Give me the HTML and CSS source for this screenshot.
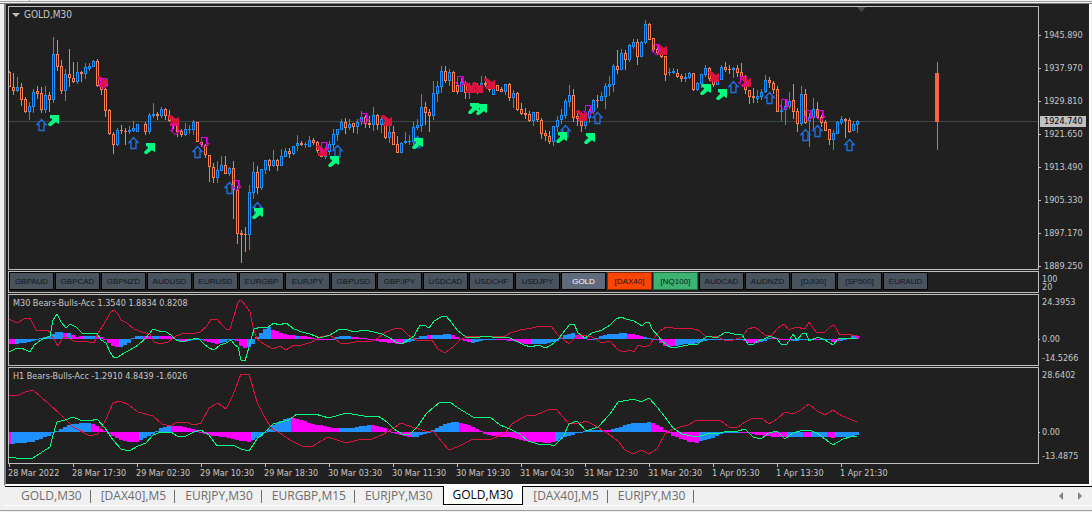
FILE: index.html
```html
<!DOCTYPE html>
<html lang="en">

<head>
    <meta charset="UTF-8">
    <meta name="viewport" content="width=device-width, initial-scale=1.0">
    <title>GOLD,M30</title>
    <link rel="stylesheet" href="styles.css">
</head>

<body>
    <header class="toolbar-edge"><span></span><span></span></header>

    <main class="terminal">
        <section class="pane pane-price">
            <div class="plot">
                <h1 class="pane-title"><span class="caret"></span>GOLD,M30</h1>
                <svg id="priceChart" class="chart"></svg>
            </div>
            <ul class="scale scale-price">
                <li>1945.890</li>
                <li>1937.970</li>
                <li>1929.810</li>
                <li>1921.650</li>
                <li>1913.490</li>
                <li>1905.330</li>
                <li>1897.170</li>
                <li>1889.250</li>
            </ul>
            <span class="bid">1924.740</span>
        </section>

        <section class="pane pane-symbols">
            <div class="plot symbols">
                <button>GBPAUD</button>
                <button>GBPCAD</button>
                <button>GBPNZD</button>
                <button>AUDUSD</button>
                <button>EURUSD</button>
                <button>EURGBP</button>
                <button>EURJPY</button>
                <button>GBPUSD</button>
                <button>GBPJPY</button>
                <button>USDCAD</button>
                <button>USDCHF</button>
                <button>USDJPY</button>
                <button class="selected">GOLD</button>
                <button class="sell">[DAX40]</button>
                <button class="buy">[NQ100]</button>
                <button>AUDCAD</button>
                <button>AUDNZD</button>
                <button>[DJI30]</button>
                <button>[SP500]</button>
                <button>EURAUD</button>
            </div>
            <ul class="scale scale-symbols">
                <li>100</li>
                <li>20</li>
            </ul>
        </section>

        <section class="pane pane-m30">
            <div class="plot">
                <h2 class="pane-title">M30 Bears-Bulls-Acc 1.3540 1.8834 0.8208</h2>
                <svg id="m30Chart" class="chart"></svg>
            </div>
            <ul class="scale scale-m30">
                <li>24.3953</li>
                <li class="zero">0.00</li>
                <li>-14.5266</li>
            </ul>
        </section>

        <section class="pane pane-h1">
            <div class="plot">
                <h2 class="pane-title">H1 Bears-Bulls-Acc -1.2910 4.8439 -1.6026</h2>
                <svg id="h1Chart" class="chart"></svg>
            </div>
            <ul class="scale scale-h1">
                <li>28.6402</li>
                <li class="zero">0.00</li>
                <li>-13.4875</li>
            </ul>
        </section>

        <ol class="time-axis">
            <li>28 Mar 2022</li>
            <li>28 Mar 17:30</li>
            <li>29 Mar 02:30</li>
            <li>29 Mar 10:30</li>
            <li>29 Mar 18:30</li>
            <li>30 Mar 03:30</li>
            <li>30 Mar 11:30</li>
            <li>30 Mar 19:30</li>
            <li>31 Mar 04:30</li>
            <li>31 Mar 12:30</li>
            <li>31 Mar 20:30</li>
            <li>1 Apr 05:30</li>
            <li>1 Apr 13:30</li>
            <li>1 Apr 21:30</li>
        </ol>
    </main>

    <nav class="tabs">
        <button>GOLD,M30</button>
        <button>[DAX40],M5</button>
        <button>EURJPY,M30</button>
        <button>EURGBP,M15</button>
        <button>EURJPY,M30</button>
        <button class="active">GOLD,M30</button>
        <button>[DAX40],M5</button>
        <button>EURJPY,M30</button>
        <div class="tab-scroll">
            <button aria-label="Previous"><svg width="4" height="8"><path d="M4 0V8L0 4Z" /></svg></button>
            <button aria-label="Next"><svg width="4" height="8"><path d="M0 0V8L4 4Z" /></svg></button>
        </div>
    </nav>
    <footer class="status-edge"></footer>

    <script src="chart.js"></script>
</body>

</html>
```
FILE: styles.css
```css
* {
    box-sizing: border-box;
}

body {
    margin: 0;
    height: 100vh;
    display: flex;
    flex-direction: column;
    overflow: hidden;
    background-color: #f0f0f0;
    font-family: "DejaVu Sans Condensed", "DejaVu Sans", sans-serif;
    font-size: 9px;
    color: #c8c8c8;
}

ul,
ol {
    list-style: none;
    margin: 0;
    padding: 0;
}

button {
    font-family: inherit;
    margin: 0;
    padding: 0;
    border: none;
    cursor: pointer;
}

.toolbar-edge {
    flex: none;
    display: flex;
    height: 4px;
    border-bottom: 1px solid #808080;
}

.toolbar-edge span {
    width: 30px;
    height: 2px;
    border-right: 1px solid #a0a0a0;
    border-bottom: 1px solid #a0a0a0;
}

.toolbar-edge span:last-child {
    flex: 1;
    border-right: none;
}

.terminal {
    flex: 1;
    min-height: 0;
    display: flex;
    flex-direction: column;
    gap: 1px;
    margin: 0 1px 0 4px;
    padding: 2px 0 0 2px;
    background-color: #202020;
    border-left: 2px solid #808080;
    border-right: 2px solid #ffffff;
    border-bottom: 2px solid #ffffff;
}

.pane {
    position: relative;
    flex: none;
    display: flex;
}

.pane-price {
    flex: 1;
    min-height: 0;
}

.pane-symbols {
    height: 22px;
}

.pane-m30 {
    height: 72px;
}

.pane-h1 {
    height: 97px;
}

.plot {
    position: relative;
    flex: 1;
    min-width: 0;
    border: 1px solid #c0c0c0;
    overflow: hidden;
}

.chart {
    display: block;
    width: 100%;
    height: 100%;
}

.pane-title {
    position: absolute;
    top: 2px;
    left: 4px;
    display: flex;
    align-items: center;
    gap: 4px;
    margin: 0;
    font-size: 9px;
    font-weight: 400;
    line-height: 12px;
    white-space: nowrap;
}

.pane-price .pane-title {
    left: 3px;
    font-size: 10px;
}

.caret {
    border: 4px solid transparent;
    border-top-color: #c0c0c0;
    border-bottom: none;
}

/* value scales */
.scale {
    flex: none;
    width: 50px;
    padding-left: 3px;
    line-height: 14px;
}

.scale li {
    position: relative;
}

.scale-price {
    height: 0;
    padding: 13px 0 0 5px;
}

.scale-price li {
    line-height: 33px;
}

.scale-price li::before,
.zero::before {
    content: "";
    position: absolute;
    left: -5px;
    top: 16px;
    width: 2px;
    height: 1px;
    background-color: #c0c0c0;
}

.scale .zero::before {
    left: -3px;
    top: 7px;
    width: 1px;
}

.scale-symbols {
    padding-top: 4px;
    line-height: 8px;
}

.scale-m30,
.scale-h1 {
    padding-top: 1px;
}

.scale-m30 .zero {
    margin: 23px 0 5px;
}

.scale-h1 .zero {
    margin: 43px 0 10px;
}

.bid {
    position: absolute;
    top: 110px;
    right: 3px;
    width: 46px;
    padding-left: 4px;
    line-height: 11px;
    color: #000000;
    background-color: #c0c0c0;
}

/* symbol switcher */
.symbols {
    display: flex;
    gap: 1px;
}

.symbols button {
    width: 45px;
    height: 18px;
    flex: none;
    font-family: "Liberation Sans", Arial, sans-serif;
    font-size: 8px;
    color: #10161c;
    background-color: #48535e;
    border: 1px solid #000000;
}

.symbols .selected {
    color: #ffffff;
    background-color: #5f6b7a;
}

.symbols .sell {
    background-color: #ff4500;
    border-color: #8b2500;
}

.symbols .buy {
    background-color: #3cb371;
    border-color: #1f6b40;
}

.time-axis {
    flex: none;
    display: grid;
    grid-auto-flow: column;
    grid-auto-columns: 64px;
    height: 20px;
    margin-top: -1px;
    line-height: 18px;
    white-space: nowrap;
    overflow: hidden;
}

.time-axis li {
    position: relative;
}

.time-axis li::before {
    content: "";
    position: absolute;
    left: 1px;
    top: 0;
    width: 1px;
    height: 3px;
    background-color: #c0c0c0;
}

/* chart tabs */
.tabs {
    flex: none;
    display: flex;
    gap: 1px;
    height: 20px;
    margin-left: 5px;
    padding-left: 7px;
    border-top: 1px solid #000000;
    border-bottom: 1px solid #ffffff;
}

.tabs button {
    position: relative;
    padding: 0 9px;
    font-family: "Open Sans", "Noto Sans", sans-serif;
    font-size: 12px;
    line-height: 18px;
    color: #6d6d6d;
    background: none;
}

.tabs button::after {
    content: "";
    position: absolute;
    right: 0;
    top: 3px;
    width: 1px;
    height: 13px;
    background-color: #6d6d6d;
}

.tabs .active {
    margin-top: -1px;
    color: #000000;
    background-color: #ffffff;
    border: 1px solid #000000;
    border-top: none;
}

.tabs .active::after,
.tabs button:nth-child(5)::after,
.tabs .tab-scroll button::after {
    display: none;
}

.tab-scroll {
    display: flex;
    margin-left: auto;
    padding-right: 3px;
}

.tabs .tab-scroll button {
    width: 19px;
    padding: 0;
    line-height: 12px;
}

.tab-scroll path {
    fill: #808080;
}

.status-edge {
    flex: none;
    height: 6px;
    border-bottom: 1px solid #f0f0f0;
    box-shadow: inset 0 -1px #a0a0a0;
}

/* chart drawing */
.candle,
.histogram {
    shape-rendering: crispEdges;
}

.up {
    fill: #1e90ff;
}

.down {
    fill: #ff7f50;
}

.hollow {
    fill: #202020;
}

.falling {
    fill: #ff00ff;
}

.forecast {
    fill: #ff6347;
}

.bid-line {
    stroke: #3d4947;
}

.shift-mark {
    fill: #444c50;
}

.bulls,
.bears {
    fill: none;
    stroke-width: 1;
    shape-rendering: crispEdges;
}

.bulls {
    stroke: #00ff7f;
}

.bears {
    stroke: #dc143c;
}

.mark-up {
    fill: none;
    stroke: #1f6fe0;
    stroke-width: 1.4;
}

.mark-down {
    fill: none;
    stroke: #e800f0;
}

.mark-edge {
    fill: none;
    stroke: #c81050;
}

.mark-buy {
    fill: #00ff7f;
}

.mark-sell {
    fill: #dc143c;
}
```
FILE: chart.js
```js
const NS = 'http://www.w3.org/2000/svg';
const STEP = 4;
const FIRST = 9;

// direction high top bottom low, one entry per bar
const candles = `
d 71 72 87 87,d 73 87 91 95,u 77 87 91 92,d 83 87 100 106,d 97 99 112 113,u 102 106 112 120,u 89 92 107 113,d 86 91 94 99,
d 87 93 110 113,u 86 95 110 113,d 92 95 100 112,u 37 54 100 103,d 40 54 67 71,d 60 66 91 94,u 69 74 91 101,d 49 74 78 87,
d 62 78 82 83,u 62 72 82 84,d 71 72 74 82,u 63 67 74 79,u 63 66 69 71,u 60 61 67 67,d 59 61 86 87,d 82 86 90 95,
d 86 89 111 117,d 109 110 134 135,d 132 134 145 154,u 128 130 145 146,d 125 130 131 134,d 128 131 132 145,u 126 130 132 134,u 121 128 131 132,
u 124 124 132 132,-,d 122 124 132 135,u 113 115 132 134,u 103 114 116 118,d 112 114 116 120,u 107 109 116 118,d 108 109 116 120,
d 110 115 121 122,d 118 122 126 129,d 121 126 132 137,d 129 131 135 137,u 123 129 135 136,u 125 129 130 134,u 120 122 130 135,d 122 122 142 142,
d 137 142 145 147,d 144 145 155 158,d 155 155 167 182,d 163 167 178 183,u 161 170 178 183,u 156 165 171 171,d 156 165 174 174,u 167 168 174 176,
d 161 168 190 219,d 186 190 234 244,d 230 233 235 263,d 227 234 235 252,u 185 192 235 250,u 162 172 193 199,d 166 172 188 194,u 169 169 188 190,
u 160 160 170 174,d 159 160 166 171,u 150 160 166 167,d 159 160 166 171,u 149 156 166 166,u 148 151 157 157,d 148 151 154 158,u 146 146 154 155,
u 135 143 146 151,d 141 143 145 146,u 142 144 145 148,u 136 140 147 147,d 138 140 143 145,d 141 142 151 153,d 143 150 157 157,u 147 151 157 159,
u 141 144 152 155,u 129 134 145 150,u 129 129 135 141,u 119 122 130 130,d 118 122 128 134,u 119 124 128 130,d 123 123 127 133,u 119 122 127 134,
u 111 117 122 125,d 115 117 124 128,d 116 123 125 128,u 107 115 125 131,d 114 115 125 130,u 117 119 125 133,d 118 122 138 139,u 125 132 138 143,
d 126 132 145 145,d 136 144 153 153,u 142 143 153 153,u 132 141 143 144,u 135 141 142 145,u 122 127 142 145,u 119 125 128 130,u 94 107 126 132,
d 102 107 113 125,d 109 112 116 132,u 81 93 116 120,u 81 86 94 102,u 66 71 87 93,d 66 71 81 83,u 69 72 81 86,d 71 72 92 92,
d 78 85 92 94,u 78 82 92 92,d 81 82 93 99,u 83 90 93 99,u 82 85 92 93,d 83 85 92 94,u 76 83 92 93,d 76 83 85 87,
d 81 85 90 92,u 84 86 95 95,d 85 85 91 91,d 87 89 92 92,u 84 84 92 95,d 83 84 98 101,u 90 93 98 108,d 92 93 110 111,
d 103 109 114 115,d 108 113 115 119,d 111 114 121 122,u 112 112 121 126,d 112 112 120 122,d 118 120 134 139,d 130 133 136 141,d 131 136 142 144,
u 126 126 142 146,u 116 120 127 132,u 109 115 120 124,u 99 101 116 119,u 85 95 102 107,d 89 95 118 122,d 112 116 119 126,d 118 121 126 132,
u 116 120 126 129,u 109 111 118 123,u 99 100 112 114,d 95 100 101 108,u 92 96 101 101,u 83 86 97 109,u 76 84 87 96,u 64 66 85 92,
d 50 66 70 74,u 49 53 70 70,d 50 53 60 70,u 44 45 60 62,u 39 42 47 49,d 39 42 57 65,u 41 42 57 57,u 20 24 43 44,
d 23 24 40 40,d 38 38 50 52,d 44 49 53 55,d 50 52 57 58,d 56 56 75 81,u 68 72 73 76,u 68 71 73 74,d 69 73 77 78,
d 74 76 79 82,u 73 77 79 82,u 72 73 78 79,d 73 73 90 91,u 82 83 90 91,u 74 74 84 88,u 65 68 75 77,d 67 68 79 81,
d 77 79 85 87,u 78 79 85 85,u 65 67 80 80,d 62 67 70 72,d 65 69 70 74,u 67 68 70 78,d 65 68 73 77,d 63 72 77 78,
d 75 76 90 94,d 90 90 97 104,d 88 96 98 103,u 90 96 99 103,u 89 92 97 100,u 75 80 92 93,d 77 80 83 88,d 81 83 90 94,
d 86 89 112 112,u 100 110 112 121,u 100 106 110 125,u 92 101 107 109,d 84 100 112 119,d 108 111 124 132,u 86 94 124 126,d 89 94 123 124,
u 113 117 121 147,u 98 109 118 129,d 102 109 118 119,d 115 117 123 127,d 120 122 131 131,d 129 129 140 145,u 130 133 140 150,u 121 122 134 134,
u 116 119 123 125,d 118 119 121 138,d 118 120 132 133,u 121 124 131 131,u 120 121 125 133`.split(',').map(s => s.trim().split(' '));

// arrows, x y
const marks = {
    up: '41,119 133,137 197,146 229,182 257,202 337,145 417,136 565,125 597,112 733,81 769,92 805,129 817,125 849,139',
    down: '103,78 175,124 204,137 236,180 324,142 364,113 460,76 588,105 656,44 743,76 784,99 808,110 820,110',
    sell: '97,76 168,115 316,145 381,115 464,82 472,82 484,78 576,110 656,44 708,71 740,76',
    buy: '48,115 144,143 252,208 328,156 412,138 468,103 476,104 556,132 584,133 700,84 716,89'
};

const m30 = {
    zero: 339,
    bars: '9,-5 15,-5 25,-4 35,-2 41,1 48,2 53,5 57,7 65,6 69,6 73,4 77,2 83,3 97,3 101,2 105,-1 109,-4 114,-8 121,-8 129,-4 133,1 137,3 170,3 174,1 178,-2 184,-3 193,-1 200,1 205,-2 213,-4 219,-5 225,-3 232,1 237,-2 241,-7 245,-9 249,-8 253,-5 257,2 261,6 265,10 269,12 273,9 281,6 289,4 301,3 309,2 313,1 319,-1 331,-1 337,2 345,3 353,2 365,1 373,-1 380,-3 390,-4 399,-5 405,-4 413,-2 418,2 423,3 430,4 439,4 447,5 453,4 459,1 463,-2 471,-4 477,-3 485,-1 500,-1 510,-2 519,-3 525,-5 545,-5 555,-3 559,-1 563,2 567,5 573,6 578,4 583,2 590,-2 596,1 605,4 613,5 625,6 637,4 645,2 651,1 659,-2 663,-6 669,-8 677,-7 685,-5 693,-5 701,-3 709,-1 740,-1 745,-2 749,-4 757,-4 763,-3 769,1 777,1 783,-1 797,-2 803,-1 829,-1 833,-3 839,-2 845,-1 849,1 853,3 857,3',
    falling: '9-14 62-66 72-82 97-118 142-150 158-171 178-188 205-218 237-246 270-293 300-330 353-403 426-431 450-471 497-530 574-583 587-592 627-642 657-675 743-759 773-790 810-820 831-838 857-859',
    bulls: '9,352 15,349 21,348 26,350 30,352 34,345 41,340 50,336 53,320 57,314 61,322 66,328 70,324 76,327 82,333 97,333 101,340 106,343 110,352 114,358 118,357 124,353 130,350 138,345 146,338 149,334 153,329 159,331 166,332 171,335 176,340 182,342 188,340 198,338 204,344 209,348 214,350 220,345 226,343 231,340 235,345 238,347 241,360 245,361 249,347 254,329 261,327 268,327 274,323 279,325 286,323 294,329 302,332 310,334 320,338 330,335 338,330 345,329 354,332 364,330 374,332 382,334 390,338 396,342 402,344 408,340 414,336 420,325 424,325 429,328 434,321 441,317 446,316 452,323 458,331 466,337 475,338 486,336 498,338 508,337 516,341 524,345 531,347 538,345 546,348 554,343 560,337 566,329 570,324 574,324 578,333 585,338 592,333 602,330 610,325 616,319 621,317 626,319 634,321 642,326 645,323 649,322 652,329 658,336 663,342 670,347 678,347 688,345 698,344 703,339 708,336 716,338 726,332 734,334 742,335 748,344 754,344 758,341 764,339 770,336 777,339 781,344 787,344 793,334 797,340 802,334 806,333 809,341 818,337 825,340 833,345 838,339 845,338 857,338',
    bears: '9,319 17,323 24,319 30,318 36,330 48,330 53,338 58,346 62,339 66,337 74,341 84,341 94,343 98,333 104,324 110,313 114,310 118,314 121,320 127,323 134,329 142,332 150,334 154,342 160,344 168,342 176,336 184,333 192,334 200,332 207,326 211,319 217,319 222,325 226,329 230,329 234,316 238,302 241,300 246,306 250,312 253,327 257,339 264,344 273,349 280,346 286,350 294,345 302,345 312,342 320,337 330,335 340,343 350,343 360,341 370,342 378,338 386,332 394,329 401,328 408,335 416,340 424,341 432,340 438,349 445,353 454,346 460,340 468,336 478,337 494,336 504,337 510,333 520,330 532,328 540,326 551,326 558,335 564,340 569,344 575,338 582,335 592,337 602,343 610,341 618,350 624,352 630,350 634,352 638,345 644,347 650,345 654,338 660,331 666,327 680,329 690,328 700,331 706,337 716,336 724,340 730,341 742,337 748,329 755,327 765,335 768,335 772,335 778,328 784,324 789,330 796,327 805,329 809,322 816,332 824,333 830,327 834,325 840,335 846,334 857,336'
};

const h1 = {
    zero: 432,
    bars: '9,-12 25,-11 33,-10 41,-7 49,-4 53,-1 57,1 61,3 67,6 75,8 83,9 91,9 95,7 99,4 105,1 109,-2 115,-5 121,-8 127,-10 137,-10 141,-8 147,-5 155,-1 159,3 165,5 171,6 180,6 187,5 193,3 199,1 205,-2 211,-4 225,-5 233,-7 241,-9 249,-10 253,-8 259,-5 265,-1 269,3 273,7 277,9 283,12 289,14 297,13 305,11 311,8 319,7 327,5 335,4 353,4 361,6 371,7 379,6 385,4 391,-1 399,-3 405,-4 411,-5 417,-5 425,-2 433,2 439,5 445,8 451,10 457,10 463,9 471,6 479,2 485,-2 493,-4 507,-5 517,-7 527,-9 537,-10 547,-11 553,-10 559,-8 565,-5 575,-2 585,1 593,2 605,2 615,3 623,6 631,9 641,9 650,10 657,7 663,4 669,-1 673,-4 681,-7 689,-10 697,-11 705,-8 713,-6 721,-2 729,-1 749,-1 757,-3 765,-4 773,-5 827,-5 833,-6 841,-5 849,-5 857,-3',
    falling: '9-10 91-138 171-250 291-338 371-410 459-554 603-610 651-698 740-786 803-810 827-834',
    bulls: '9,457 16,458 33,458 50,447 53,435 57,422 65,420 73,417 80,420 90,421 97,419 105,428 113,440 121,449 129,451 138,446 146,443 153,435 161,432 171,432 177,436 186,436 194,432 201,430 209,435 217,446 233,445 241,449 249,451 257,439 265,432 273,424 289,420 297,414 315,414 329,418 346,413 358,415 370,417 378,416 387,422 394,429 402,434 410,434 418,426 426,414 434,407 440,402 450,402 458,408 473,417 490,417 500,425 512,430 520,434 528,441 538,444 548,444 554,446 563,437 569,424 577,421 586,431 598,427 610,414 618,402 634,399 641,402 649,398 657,407 665,417 673,428 682,434 697,437 707,434 720,433 728,431 738,431 745,429 753,437 761,439 769,433 777,431 785,439 793,433 800,431 809,430 817,433 825,439 833,445 843,439 850,437 857,436',
    bears: '9,395 17,396 25,392 33,390 49,404 60,414 73,427 90,436 98,434 106,419 113,403 120,401 129,405 138,412 153,416 162,424 170,426 177,422 186,422 194,425 201,423 209,408 218,403 226,409 233,395 241,374 249,374 257,402 265,418 273,430 280,433 290,440 302,446 313,446 328,437 346,443 362,439 372,439 384,434 392,429 401,423 409,426 425,431 434,432 442,442 449,450 457,447 473,439 490,440 505,433 512,424 520,419 528,415 536,415 550,409 557,410 568,423 577,424 586,421 594,425 602,430 610,435 618,441 625,450 633,454 641,450 649,454 657,449 665,434 673,429 688,425 697,420 720,420 729,427 737,428 745,422 753,418 762,418 769,424 777,419 785,412 793,414 801,410 809,404 817,411 825,415 833,410 842,416 850,419 857,422'
};

function add(parent, tag, attrs) {
    const el = document.createElementNS(NS, tag);
    for (const name in attrs) {
        el.setAttribute(name, attrs[name]);
    }
    parent.appendChild(el);
    return el;
}

function rect(parent, cls, x, y, width, height) {
    add(parent, 'rect', { class: cls, x, y, width, height });
}

function parsePoints(text) {
    return text.split(' ').map(p => p.split(',').map(Number));
}

function drawPrice() {
    const svg = document.getElementById('priceChart');
    add(svg, 'line', { class: 'bid-line', x1: 0, y1: 114.5, x2: '100%', y2: 114.5 });
    const g = add(svg, 'g', { transform: 'translate(-9,-7)' });
    add(g, 'path', { class: 'shift-mark', d: 'M857 7H866L861.5 12Z' });

    const bars = add(g, 'g', { class: 'candle' });
    candles.forEach((c, i) => {
        if (c[0] === '-') return;
        const cls = c[0] === 'u' ? 'up' : 'down';
        const [high, top, bottom, low] = c.slice(1).map(Number);
        const x = FIRST + i * STEP;
        rect(bars, cls, x, high, 1, Math.max(1, low - high));
        rect(bars, cls, x - 1, top, 3, Math.max(1, bottom - top));
        if (bottom - top > 2) {
            rect(bars, 'hollow', x, top + 1, 1, bottom - top - 2);
        }
    });

    // last daily candle
    rect(bars, 'forecast', 937, 62, 1, 88);
    rect(bars, 'forecast', 935, 73, 4, 49);

    function place(list, shapes) {
        parsePoints(list).forEach(([x, y]) => {
            const mark = add(g, 'g', { transform: `translate(${x},${y})` });
            shapes.forEach(([cls, d]) => add(mark, 'path', { class: cls, d }));
        });
    }
    place(marks.up, [['mark-up', 'M.5 .5L5 5.5H3V11.5H-2V5.5H-4Z']]);
    place(marks.buy, [['mark-buy', 'M2 0H11V9L9 8L8 7L3 11H1L0 9L4 5V4L2 3Z']]);
    place(marks.sell, [['mark-sell', 'M2 11H11V2L9 3L8 4L3 0H1L0 2L4 6V7L2 8Z']]);
    place(marks.down, [
        ['mark-edge', 'M3.5 0V6.5H5.5L1.5 10.5'],
        ['mark-down', 'M-2.5 .5H2.5V6.5H4.5L0 10.5L-4.5 6.5H-2.5Z']
    ]);
}

function drawIndicator(id, top, data) {
    const g = add(document.getElementById(id), 'g', { transform: `translate(-9,${-top})` });
    const hist = add(g, 'g', { class: 'histogram' });
    const points = parsePoints(data.bars);
    const falling = data.falling.split(' ').map(r => r.split('-').map(Number));
    for (let x = FIRST, k = 0; x <= 857; x += STEP) {
        while (k < points.length - 2 && points[k + 1][0] < x) k++;
        const [x0, v0] = points[k];
        const [x1, v1] = points[k + 1];
        const value = Math.round(v0 + (v1 - v0) * (x - x0) / (x1 - x0));
        const cls = falling.some(([a, b]) => x >= a && x <= b) ? 'falling' : 'up';
        rect(hist, cls, x - 2, value > 0 ? data.zero - value : data.zero, 4, Math.max(1, Math.abs(value)));
    }
    add(g, 'polyline', { class: 'bears', points: data.bears });
    add(g, 'polyline', { class: 'bulls', points: data.bulls });
}

drawPrice();
drawIndicator('m30Chart', 295, m30);
drawIndicator('h1Chart', 368, h1);
```
